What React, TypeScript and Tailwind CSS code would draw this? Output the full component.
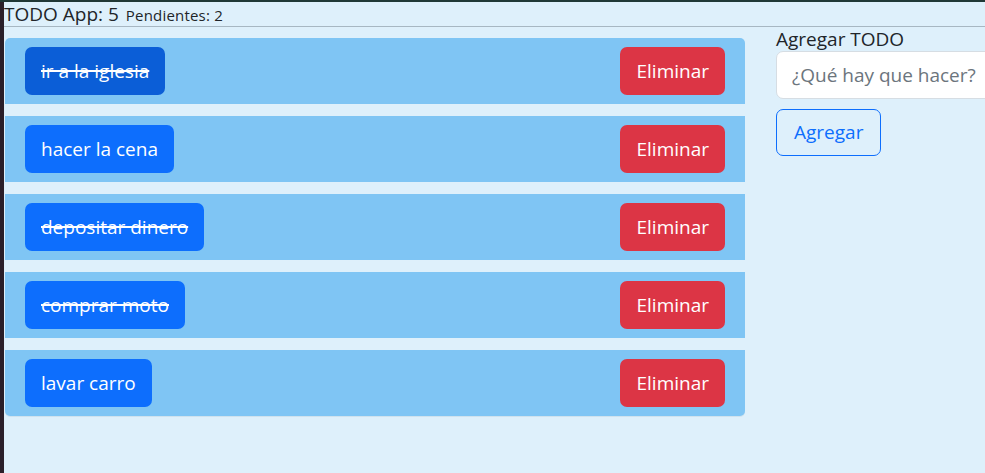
import React from "react";

const todos = [
  { text: "ir a la iglesia", done: true, hover: true },
  { text: "hacer la cena", done: false },
  { text: "depositar dinero", done: true },
  { text: "comprar moto", done: true },
  { text: "lavar carro", done: false },
];

export default function App() {
  return (
    <div
      className="w-[985px] h-[473px] overflow-hidden bg-[#2a1f29] border-t-2 border-t-[#203836] pl-[4px] text-[#212529]"
      style={{ fontFamily: '"Open Sans", "Noto Sans", sans-serif' }}
    >
      <div className="h-full bg-[#def0fb] overflow-hidden">
        <div className="h-[25px] border-b border-[#a7b7c2] flex items-end pb-[1px] whitespace-nowrap">
          <span className="text-[19px] leading-[22px]">TODO App: 5</span>
          <span className="text-[15px] leading-[20px] ml-[7px] tracking-[0.2px]">Pendientes: 2</span>
        </div>
        <div className="flex pt-[11px]">
          <div className="ml-[1px] w-[740px] flex flex-col gap-[12px] shrink-0">
            {todos.map((t, i) => (
              <div
                key={i}
                className={`bg-[#7fc5f4] h-[66px] px-[20px] flex items-center justify-between ${
                  i === 0 ? "rounded-t-[5px]" : ""
                } ${i === todos.length - 1 ? "rounded-b-[5px] shadow-[0_1px_0_#cfe2ee]" : ""}`}
              >
                <button
                  className={`h-[48px] px-[16px] rounded-[7px] text-white text-[19px] decoration-[1.5px] ${
                    t.hover ? "bg-[#0b5ed7]" : "bg-[#0d6efd]"
                  } ${t.done ? "line-through" : ""}`}
                >
                  {t.text}
                </button>
                <button className="h-[48px] px-[16px] rounded-[7px] bg-[#dc3545] text-white text-[19px]">
                  Eliminar
                </button>
              </div>
            ))}
          </div>
          <div className="ml-[31px] -mt-[10px] flex flex-col items-start shrink-0">
            <div className="text-[19px] leading-[22px] whitespace-nowrap">Agregar TODO</div>
            <input
              className="mt-[1px] w-[260px] h-[48px] bg-white border border-[#d6dde3] rounded-[7px] px-[15px] text-[19px] placeholder:text-[#6c757d] outline-none"
              placeholder="¿Qué hay que hacer?"
            />
            <button className="mt-[10px] h-[47px] px-[17px] rounded-[7px] border border-[#0d6efd] text-[#0d6efd] text-[19px]">
              Agregar
            </button>
          </div>
        </div>
      </div>
    </div>
  );
}
